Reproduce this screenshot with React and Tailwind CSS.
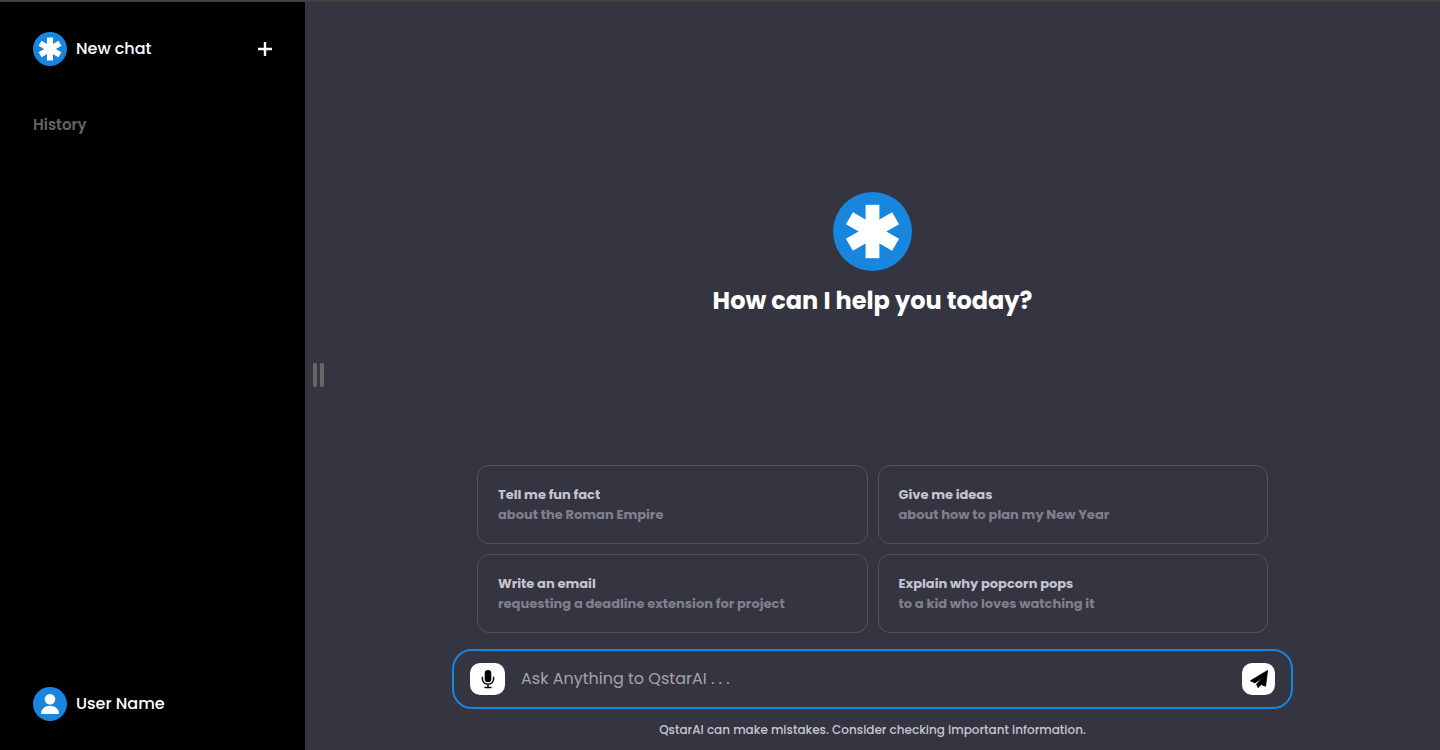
const suggestions = [
  { title: "Tell me fun fact", detail: "about the Roman Empire" },
  { title: "Give me ideas", detail: "about how to plan my New Year" },
  { title: "Write an email", detail: "requesting a deadline extension for project" },
  { title: "Explain why popcorn pops", detail: "to a kid who loves watching it" },
];

function Logo({ className }) {
  return (
    <svg viewBox="0 0 80 80" className={className} aria-hidden="true">
      <circle cx="40" cy="40" r="40" fill="#1885de" />
      <g fill="#fff">
        <rect x="33" y="13" width="14" height="54" />
        <rect x="33" y="13" width="14" height="54" transform="rotate(60 40 40)" />
        <rect x="33" y="13" width="14" height="54" transform="rotate(120 40 40)" />
      </g>
    </svg>
  );
}

function Avatar() {
  return (
    <svg viewBox="0 0 34 34" className="size-[34px] shrink-0" aria-hidden="true">
      <circle cx="17" cy="17" r="17" fill="#1885de" />
      <circle cx="17" cy="12.2" r="5.3" fill="#fff" />
      <path d="M8 27c0-5 4-8.200 9-8.200s9 3.200 9 8.200z" fill="#fff" />
    </svg>
  );
}

function MicIcon() {
  return (
    <svg viewBox="0 0 14 20" className="h-5 w-[14px]" aria-hidden="true">
      <rect x="3.700" y="1" width="6.600" height="12.200" rx="3.300" fill="currentColor" />
      <path
        d="M1.400 8.200v1.900a5.600 5.200 0 0 0 11.200 0V8.200M7 15.300v3.200M4 18.500h6"
        fill="none"
        stroke="currentColor"
        strokeWidth="1.400"
        strokeLinecap="round"
      />
    </svg>
  );
}

function SendIcon() {
  return (
    <svg viewBox="0 0 18 18" className="size-[18px]" fill="currentColor" aria-hidden="true">
      <path
        d="M17.600 .4 15.600 16.200 11.200 14.600 8 17.600 6.600 14.200 12.400 7.600 5 12.900 .4 10.800Z"
        stroke="currentColor"
        strokeWidth=".8"
        strokeLinejoin="round"
      />
    </svg>
  );
}

function Sidebar() {
  return (
    <aside className="flex w-[305px] shrink-0 flex-col bg-black px-[33px] pt-[30px] pb-[29px]">
      <button type="button" className="flex items-center gap-[9px] text-white">
        <Logo className="size-[34px] shrink-0" />
        <span className="text-base font-medium">New chat</span>
        <svg viewBox="0 0 14 14" className="ml-auto size-[14px]" aria-hidden="true">
          <path d="M7 0v14M0 7h14" stroke="#fff" strokeWidth="2.4" />
        </svg>
      </button>
      <h2 className="mt-[49px] text-[15px] leading-5 font-semibold text-[#646464]">History</h2>
      <button type="button" className="mt-auto flex items-center gap-[9px] text-white">
        <Avatar />
        <span className="text-base font-medium">User Name</span>
      </button>
    </aside>
  );
}

function Composer() {
  return (
    <form
      className="mt-4 flex h-[60px] items-center rounded-[20px] border-2 border-[#1885de] px-4"
      onSubmit={(event) => event.preventDefault()}
    >
      <button
        type="button"
        aria-label="Voice input"
        className="flex h-8 w-[35px] shrink-0 items-center justify-center rounded-[10px] bg-white text-black"
      >
        <MicIcon />
      </button>
      <input
        type="text"
        aria-label="Message"
        placeholder="Ask Anything to QstarAI . . ."
        className="mx-4 min-w-0 flex-1 bg-transparent text-base text-white outline-none placeholder:text-[#a5a4a8]"
      />
      <button
        type="submit"
        aria-label="Send"
        className="flex h-8 w-[33px] shrink-0 items-center justify-center rounded-[10px] bg-white text-black"
      >
        <SendIcon />
      </button>
    </form>
  );
}

export default function App() {
  return (
    <div className="flex min-h-screen border-t-2 border-[#414141] bg-[#353541] font-['Poppins','Inter',sans-serif]">
      <Sidebar />
      <button
        type="button"
        aria-label="Toggle sidebar"
        className="-mr-7 flex w-7 shrink-0 items-center gap-[3px] pb-[2px] pl-2"
      >
        <span className="h-6 w-1 rounded-[1px] bg-[#696565]" />
        <span className="h-6 w-1 rounded-[1px] bg-[#696565]" />
      </button>
      <main className="flex min-w-0 flex-1 flex-col items-center px-6 pb-[10px]">
        <section className="flex flex-1 flex-col items-center justify-center pt-[43px]">
          <Logo className="size-[79px]" />
          <h1 className="mt-3 text-2xl leading-9 font-bold text-white">How can I help you today?</h1>
        </section>
        <div className="w-full max-w-[841px]">
          <div className="grid grid-cols-2 gap-[10px] px-[25px]">
            {suggestions.map((item) => (
              <button
                key={item.title}
                type="button"
                className="flex h-[79px] flex-col justify-center rounded-xl border border-[#53535e] px-5 text-left text-[13px] leading-5 font-bold"
              >
                <span className="text-[#c5c5d2]">{item.title}</span>
                <span className="text-[#80808d]">{item.detail}</span>
              </button>
            ))}
          </div>
          <Composer />
        </div>
        <p className="mt-[11px] text-xs leading-5 font-medium text-[#c5c5d2]">
          QstarAI can make mistakes. Consider checking important information.
        </p>
      </main>
    </div>
  );
}
